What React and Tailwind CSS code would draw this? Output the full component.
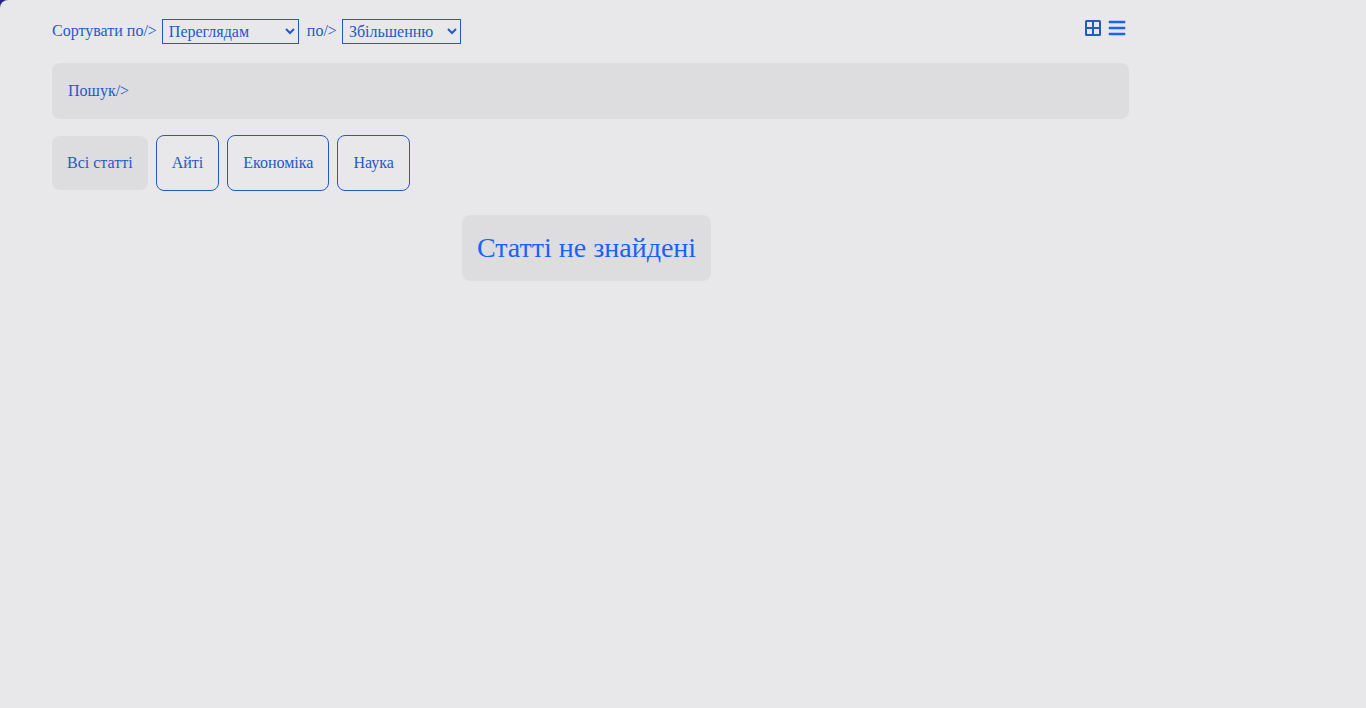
import { useState } from 'react';

const categories = ['Всі статті', 'Айті', 'Економіка', 'Наука'];

function SortSelect({ id, label, options, className }) {
  return (
    <div className="flex items-start gap-[5px]">
      <label htmlFor={id} className="leading-6">{label}</label>
      <select
        id={id}
        className={`h-[25px] border border-[#2459c9] bg-transparent px-[2px] text-base leading-5 ${className}`}
      >
        {options.map((option) => (
          <option key={option}>{option}</option>
        ))}
      </select>
    </div>
  );
}

function Toolbar() {
  return (
    <div className="flex items-start justify-between pr-1">
      <div className="flex flex-wrap gap-2">
        <SortSelect
          id="sort-field"
          label="Сортувати по/>"
          options={['Переглядам', 'Назві', 'Даті створення']}
          className="w-[137px]"
        />
        <SortSelect
          id="sort-order"
          label="по/>"
          options={['Збільшенню', 'Зменшенню']}
          className="w-[119px]"
        />
      </div>
      <div className="flex gap-2 pt-px">
        <button type="button" aria-label="Плитка" className="block">
          <svg width="16" height="16" viewBox="0 0 16 16" fill="none" stroke="#2459c9" strokeWidth="2">
            <rect x="1" y="1" width="14" height="14" rx="0.6" />
            <path d="M8 1v14M1 8h14" />
          </svg>
        </button>
        <button type="button" aria-label="Список" className="block">
          <svg
            width="16"
            height="16"
            viewBox="0 0 16 16"
            fill="#1a62ff"
            className="overflow-visible"
          >
            <rect x="-0.2" y="0.7" width="16.4" height="2.6" rx="0.6" />
            <rect x="-0.2" y="6.7" width="16.4" height="2.6" rx="0.6" />
            <rect x="-0.2" y="12.7" width="16.4" height="2.6" rx="0.6" />
          </svg>
        </button>
      </div>
    </div>
  );
}

export default function App() {
  const [active, setActive] = useState(categories[0]);

  return (
    <div className="min-h-screen bg-[#26267f] font-['Liberation_Serif',serif] text-base text-[#2459c9]">
      <main className="min-h-screen rounded-tl-lg bg-[#e8e8ea] pt-[19px] pr-[237px] pl-[52px]">
        <Toolbar />
        <div className="mt-[19px] flex h-14 items-center gap-1 rounded-lg bg-[#dddddf] px-4">
          <label htmlFor="search">Пошук/&gt;</label>
          <input id="search" type="text" className="min-w-0 flex-1 bg-transparent outline-none" />
        </div>
        <div className="mt-4 flex flex-wrap items-center gap-2">
          {categories.map((category) => (
            <button
              key={category}
              type="button"
              onClick={() => setActive(category)}
              className={
                category === active
                  ? 'h-[54px] rounded-lg bg-[#dddddf] px-[15px]'
                  : 'h-14 rounded-lg border border-[#2459c9] px-[15px]'
              }
            >
              {category}
            </button>
          ))}
        </div>
        <div className="mt-6 flex justify-center pr-2">
          <p className="rounded-lg bg-[#dddddf] px-[15px] py-[15px] text-[28px] leading-9 text-[#1a62ff]">
            Статті не знайдені
          </p>
        </div>
      </main>
    </div>
  );
}
